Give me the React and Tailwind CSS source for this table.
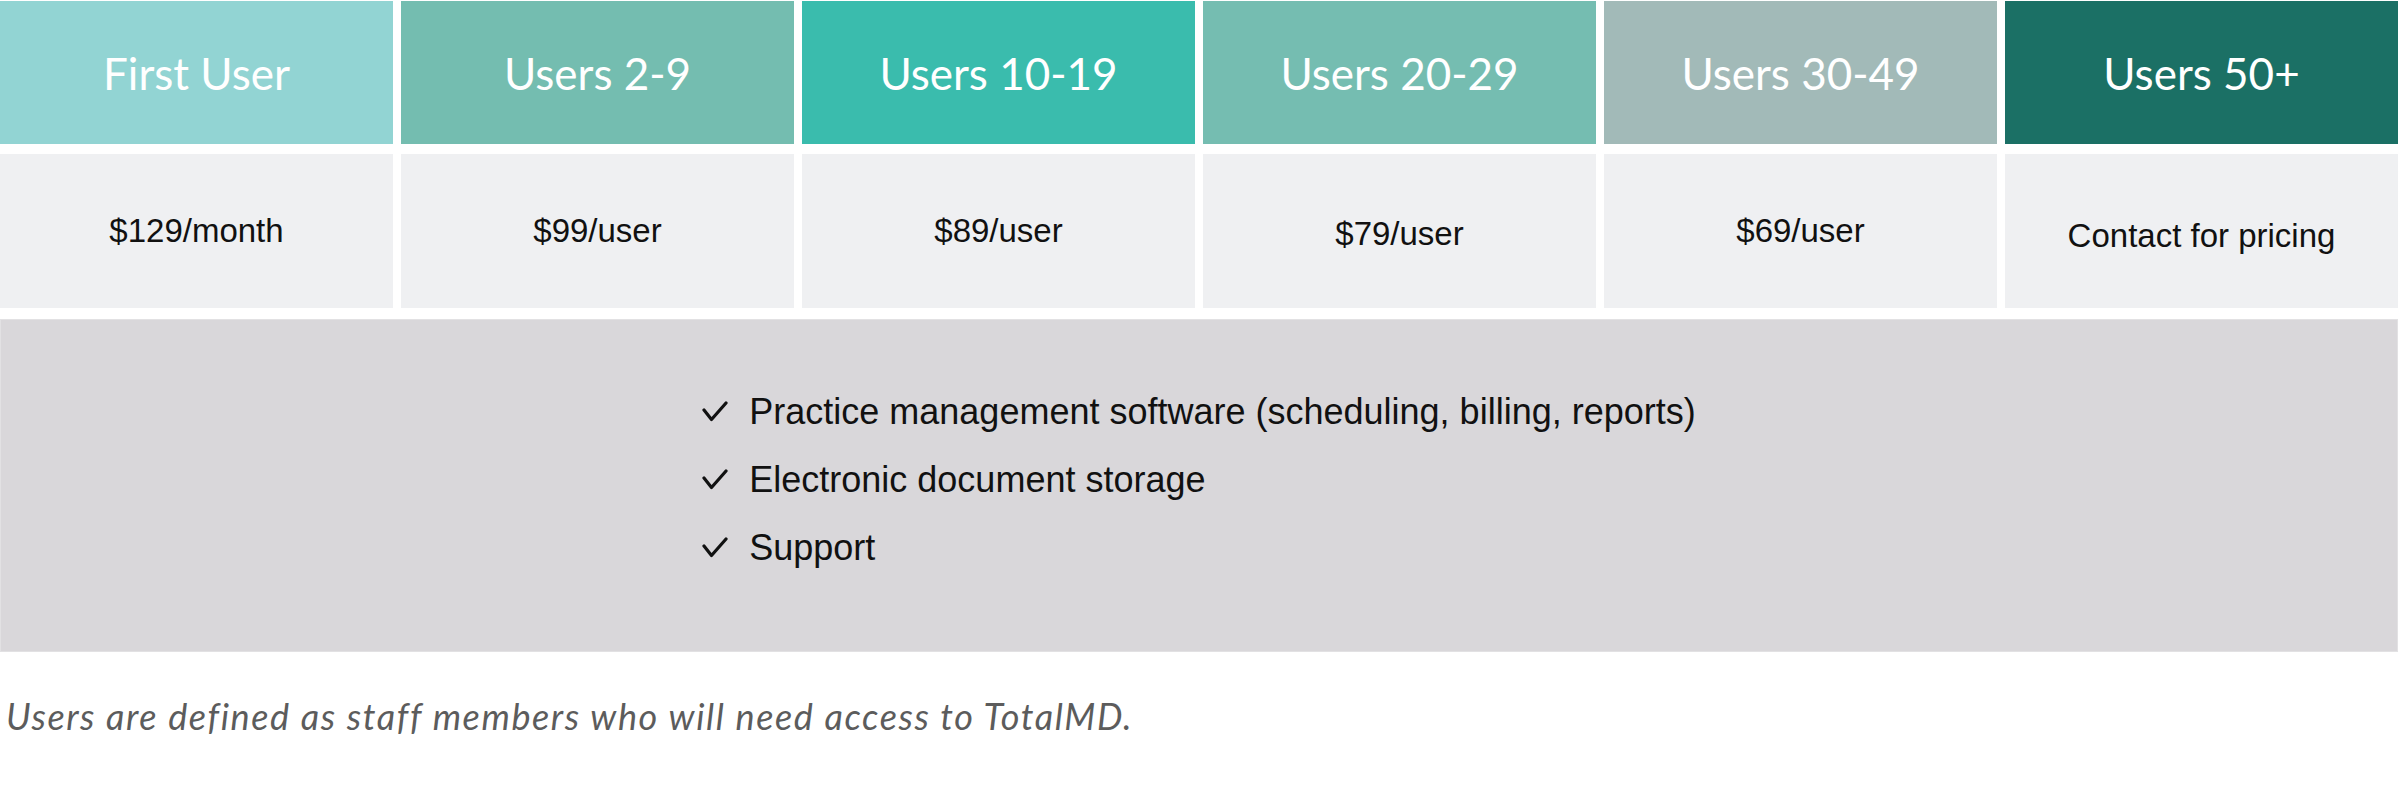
import React from 'react'

const tiers = [
  { label: 'First User',  price: '$129/month',          bg: 'bg-[#92d4d3]', shift: 'pt-0' },
  { label: 'Users 2-9',   price: '$99/user',            bg: 'bg-[#74bdb0]', shift: 'pt-0' },
  { label: 'Users 10-19', price: '$89/user',            bg: 'bg-[#3abcad]', shift: 'pt-0' },
  { label: 'Users 20-29', price: '$79/user',            bg: 'bg-[#75bdb1]', shift: 'pt-[5px]' },
  { label: 'Users 30-49', price: '$69/user',            bg: 'bg-[#a2bab8]', shift: 'pt-0' },
  { label: 'Users 50+',   price: 'Contact for pricing', bg: 'bg-[#1b7065]', shift: 'pt-[10px]' },
]

const features = [
  'Practice management software (scheduling, billing, reports)',
  'Electronic document storage',
  'Support',
]

const Check = () => (
  <svg width="26" height="22" viewBox="0 0 26 22" fill="none" className="shrink-0">
    <polyline points="2,9 9.5,18.5 24,2" stroke="#111" strokeWidth="3.2" strokeLinecap="round" strokeLinejoin="round" />
  </svg>
)

const App = () => {
  return (
    <div className="w-[2398px] h-[802px] bg-white pt-[1px] overflow-hidden">
      {/* tier headers + prices */}
      <div className="grid grid-cols-6 grid-rows-[143px_154px] gap-x-[8px] gap-y-[10px]">
        {tiers.map(t => (
          <div
            key={t.label}
            className={`${t.bg} flex items-center justify-center text-white text-[44px] font-['Lato',sans-serif]`}
          >
            {t.label}
          </div>
        ))}
        {tiers.map(t => (
          <div
            key={t.price}
            className={`bg-[#eff0f2] flex items-center justify-center text-[#111] text-[33px] font-['Liberation_Sans',Arial,sans-serif] ${t.shift}`}
          >
            {t.price}
          </div>
        ))}
      </div>

      {/* included features */}
      <div className="mt-[11px] h-[333px] bg-[#d9d7da] border border-[#e2e1e3] flex items-center justify-center pb-[11px]">
        <ul className="font-['Liberation_Sans',Arial,sans-serif] text-[36px] leading-[68px] text-[#111]">
          {features.map(f => (
            <li key={f} className="flex items-center gap-[21px]">
              <Check />
              <span>{f}</span>
            </li>
          ))}
        </ul>
      </div>

      <p className="mt-[44px] pl-[6px] font-['Lato',sans-serif] italic text-[36px] leading-[40px] tracking-[1.6px] text-[#5c5c5c]">
        Users are defined as staff members who will need access to TotalMD.
      </p>
    </div>
  )
}

export default App
